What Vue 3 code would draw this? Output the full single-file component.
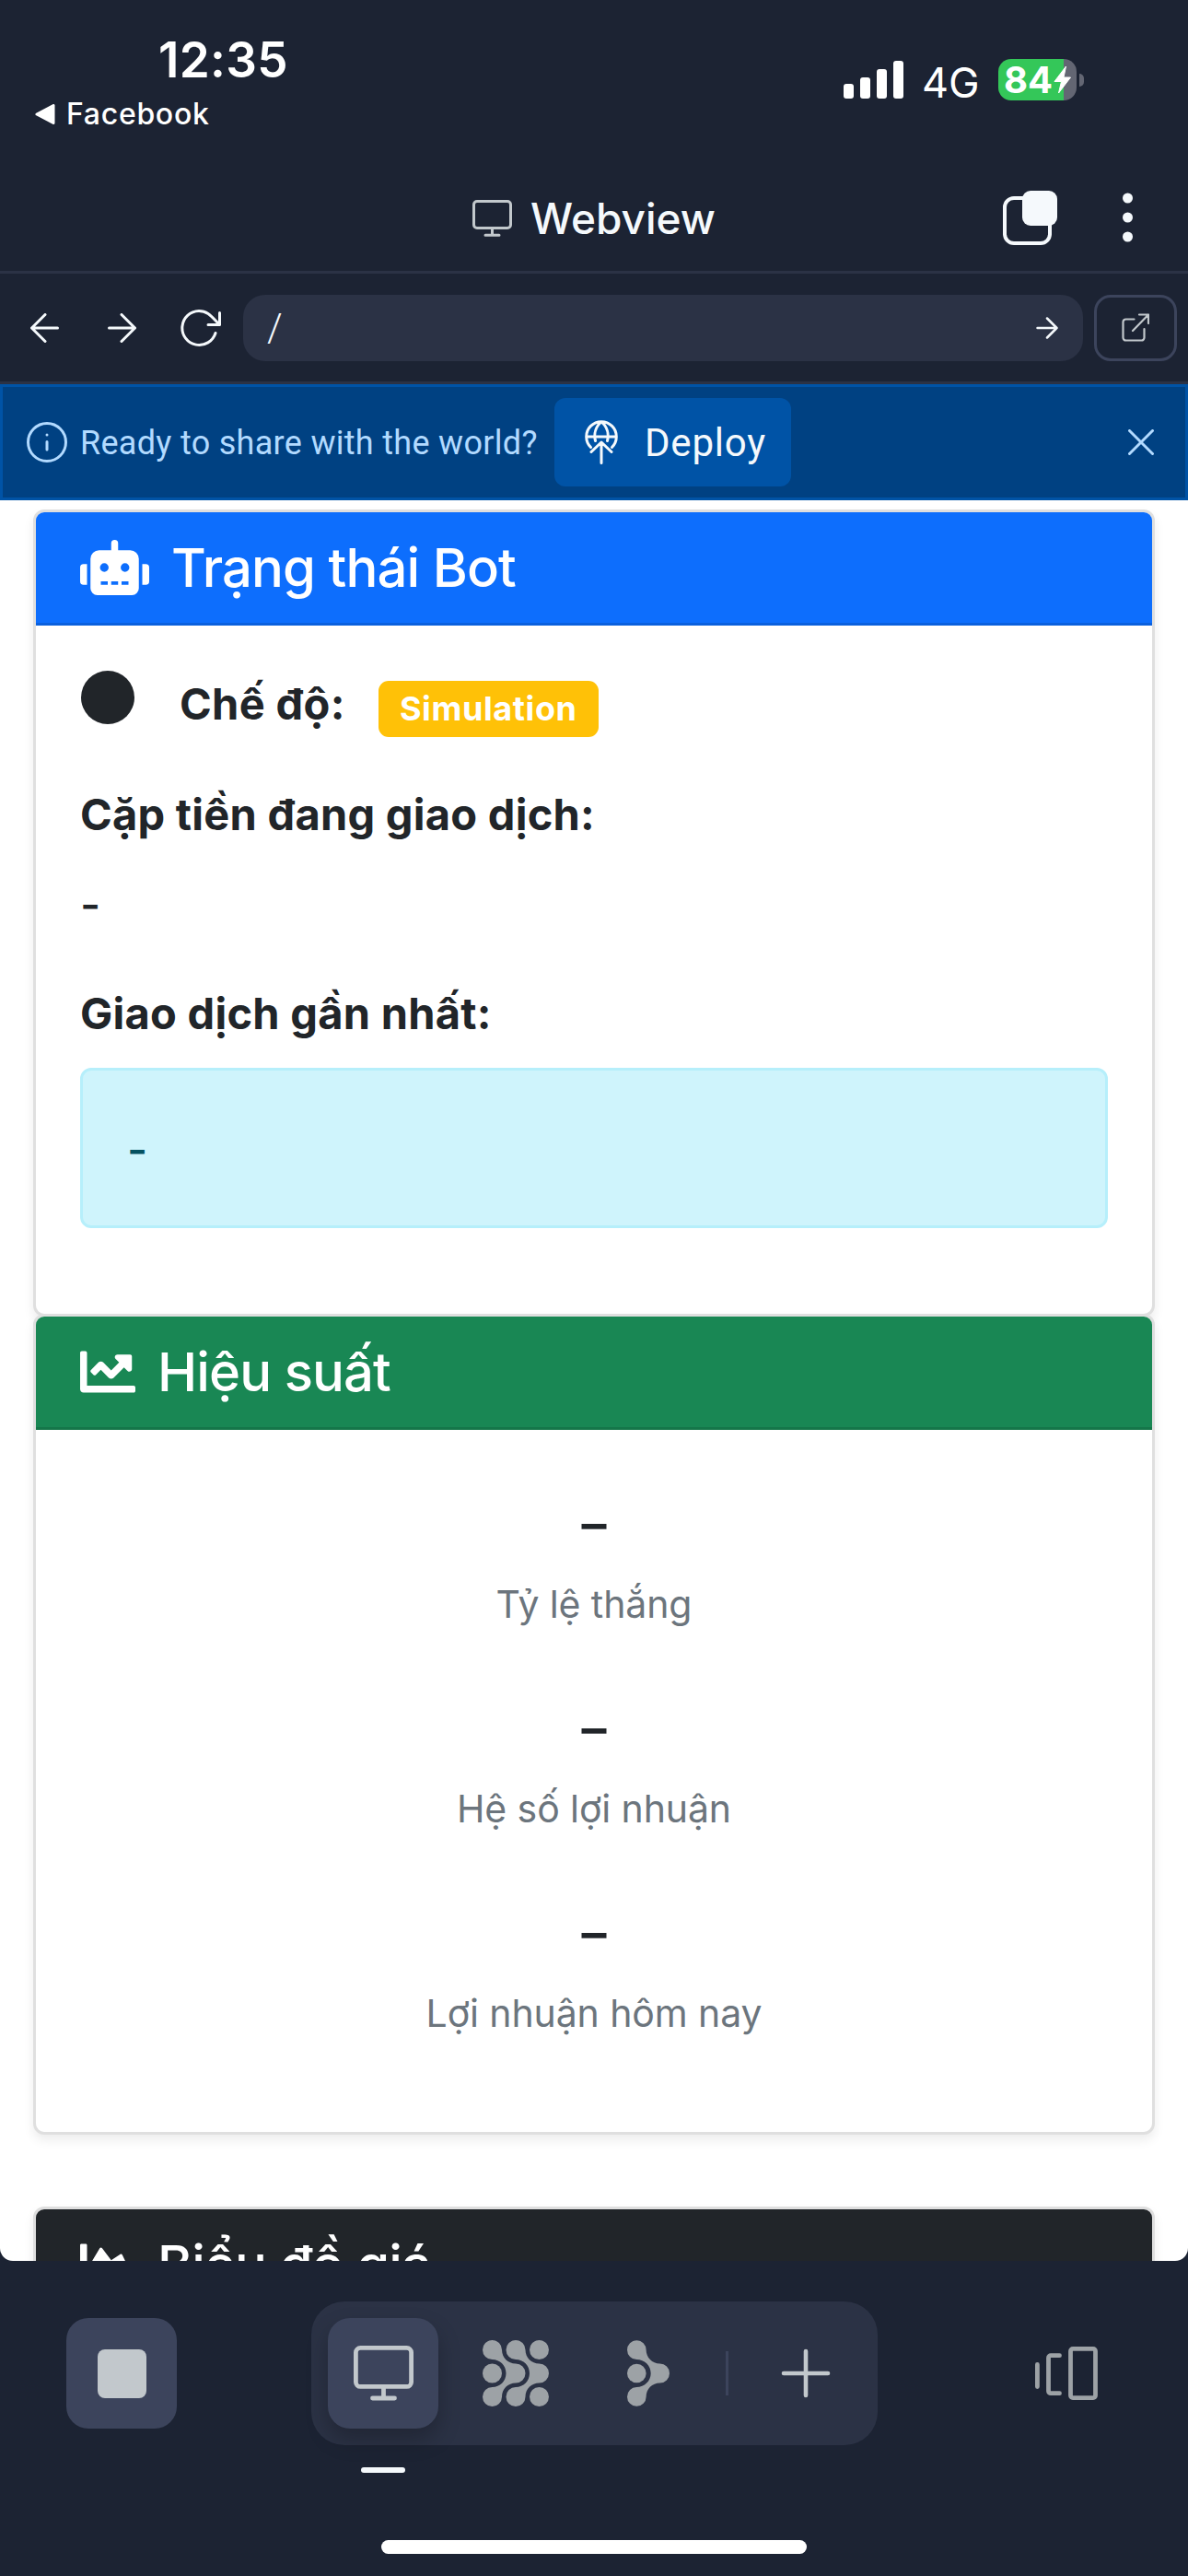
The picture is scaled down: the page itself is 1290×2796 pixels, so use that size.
<script setup>
const bars = [16, 23, 32, 41]
const stats = ['Tỷ lệ thắng', 'Hệ số lợi nhuận', 'Lợi nhuận hôm nay']
</script>

<template>
  <div class="screen">
    <header class="status">
      <div class="status-left">
        <div class="time">12:35</div>
        <div class="back-app">
          <svg width="22" height="22" viewBox="0 0 22 22"><path d="M20 1.500v19L2 11z" fill="#fff" stroke="#fff" stroke-width="3" stroke-linejoin="round" /></svg>
          <span>Facebook</span>
        </div>
      </div>
      <div class="status-right">
        <div class="signal"><i v-for="h in bars" :key="h" :style="{ height: h + 'px' }"></i></div>
        <span class="network">4G</span>
        <div class="battery">
          <span>84</span>
          <svg width="19" height="31" viewBox="0 0 19 31"><path d="M13.500 1 1 17.500h7.500L5.500 30 18.500 13H11z" fill="#fff" stroke="#fff" stroke-linejoin="round" /></svg>
        </div>
        <i class="nub"></i>
      </div>
    </header>

    <div class="titlebar">
      <div class="title">
        <svg width="43" height="40" viewBox="0 0 43 40" fill="none" stroke="#c2c8cc" stroke-width="3" stroke-linecap="round"><rect x="1.500" y="1.500" width="40" height="29" rx="3.500" /><path d="M21.500 31v7M14 38.200h15" /></svg>
        <span>Webview</span>
      </div>
      <div class="title-actions">
        <svg width="59" height="59" viewBox="0 0 59 59"><rect x="2" y="8" width="49" height="49" rx="10" fill="none" stroke="#f5f9fc" stroke-width="4" /><rect x="21" y="0" width="38" height="38" rx="9" fill="#f5f9fc" /></svg>
        <svg width="11" height="54" viewBox="0 0 11 54" fill="#f5f9fc"><circle cx="5.500" cy="6" r="5.500" /><circle cx="5.500" cy="27" r="5.500" /><circle cx="5.500" cy="48" r="5.500" /></svg>
      </div>
    </div>

    <nav class="nav">
      <svg class="back" width="31" height="32" viewBox="0 0 31 32" fill="none" stroke="#f5f9fc" stroke-width="3" stroke-linecap="round" stroke-linejoin="round"><path d="M29.500 16H1.500M16 1.500 1.500 16 16 30.500" /></svg>
      <svg class="forward" width="31" height="32" viewBox="0 0 31 32" fill="none" stroke="#f5f9fc" stroke-width="3" stroke-linecap="round" stroke-linejoin="round"><path d="M1.500 16h28M15 1.500 29.500 16 15 30.500" /></svg>
      <svg class="reload" width="44" height="42" viewBox="0 0 44 42" fill="none" stroke="#f5f9fc" stroke-width="3" stroke-linecap="round" stroke-linejoin="round"><path d="M38 26.500A18.500 18.500 0 1 1 20 2.500C30 2.500 34 9 42.500 17.500M42.500 4.500v13H30" /></svg>
      <div class="address">
        <span>/</span>
        <svg width="24" height="24" viewBox="0 0 24 24" fill="none" stroke="#f5f9fc" stroke-width="2.500" stroke-linecap="round" stroke-linejoin="round"><path d="M1.500 12h21M12 1.500 22.500 12 12 22.500" /></svg>
      </div>
      <div class="external">
        <svg width="30" height="31" viewBox="0 0 30 31" fill="none" stroke="#c2c8cc" stroke-width="2.200" stroke-linecap="round" stroke-linejoin="round"><path d="M13.500 6.500H4.500a3 3 0 0 0-3 3v17a3 3 0 0 0 3 3h17a3 3 0 0 0 3-3v-9.500M19 1.500h10V11M29 1.500 12 19" /></svg>
      </div>
    </nav>

    <div class="banner">
      <svg width="44" height="44" viewBox="0 0 44 44" fill="none" stroke="#b2daff" stroke-width="3" stroke-linecap="round"><circle cx="22" cy="22" r="20.500" /><path d="M22 21.500V30M22 14v.1" /></svg>
      <span class="banner-text">Ready to share with the world?</span>
      <div class="deploy">
        <svg width="36" height="48" viewBox="0 0 36 48" fill="none" stroke="#f5f9fc" stroke-width="3" stroke-linecap="round" stroke-linejoin="round"><path d="M6.500 29.500A16.300 16.300 0 1 1 29.500 29.500M1.700 18h32.600M11.500 22.500C9.500 15 12 7 18 1.700 24 7 26.500 15 24.500 22.500M18 46.500V25M7 34.500 18 24l11 10.500" /></svg>
        <span>Deploy</span>
      </div>
      <svg class="close" width="28" height="28" viewBox="0 0 28 28" fill="none" stroke="#b2daff" stroke-width="3" stroke-linecap="round"><path d="M1.500 1.500l25 25M26.500 1.500l-25 25" /></svg>
    </div>

    <main class="page">
      <section class="card status-card">
        <div class="card-header primary">
          <svg width="75" height="60" viewBox="0 0 640 512" fill="#fff"><path d="M32,224H64V416H32A31.960,31.960,0,0,1,0,384V256A31.960,31.960,0,0,1,32,224Zm512-48V448a64.060,64.060,0,0,1-64,64H160a64.060,64.060,0,0,1-64-64V176a79.970,79.970,0,0,1,80-80H288V32a32,32,0,0,1,64,0V96H464A79.970,79.970,0,0,1,544,176ZM264,256a40,40,0,1,0-40,40A40,40,0,0,0,264,256Zm-8,128H192v32h64Zm96,0H288v32h64ZM456,256a40,40,0,1,0-40,40A40,40,0,0,0,456,256Zm-8,128H384v32h64ZM640,256V384a31.960,31.960,0,0,1-32,32H576V224h32A31.960,31.960,0,0,1,640,256Z" /></svg>
          <span>Trạng thái Bot</span>
        </div>
        <div class="status-body">
          <div class="mode">
            <i class="dot"></i>
            <strong>Chế độ:</strong>
            <span class="badge">Simulation</span>
          </div>
          <div class="label pair-label">Cặp tiền đang giao dịch:</div>
          <div class="value">-</div>
          <div class="label last-label">Giao dịch gần nhất:</div>
          <div class="alert">-</div>
        </div>
      </section>

      <section class="card perf-card">
        <div class="card-header success">
          <svg width="60" height="60" viewBox="0 0 512 512" fill="#fff"><path d="M496 384H64V80c0-8.840-7.160-16-16-16H16C7.160 64 0 71.160 0 80v336c0 17.670 14.330 32 32 32h464c8.840 0 16-7.160 16-16v-32c0-8.840-7.160-16-16-16zM464 96H345.940c-21.380 0-32.090 25.850-16.970 40.970l32.400 32.400L288 242.750l-73.370-73.370c-12.500-12.500-32.760-12.500-45.250 0l-68.690 68.690c-6.250 6.250-6.250 16.380 0 22.630l22.620 22.620c6.250 6.250 16.380 6.250 22.630 0L192 237.250l73.370 73.370c12.500 12.500 32.760 12.500 45.250 0l96-96 32.400 32.400c15.120 15.120 40.970 4.410 40.970-16.970V112c.01-8.840-7.150-16-15.990-16z" /></svg>
          <span>Hiệu suất</span>
        </div>
        <div class="stats">
          <div v-for="s in stats" :key="s" class="stat">
            <div class="stat-value">–</div>
            <div class="stat-label">{{ s }}</div>
          </div>
        </div>
      </section>

      <section class="card chart-card">
        <div class="card-header dark">
          <svg width="60" height="60" viewBox="0 0 512 512" fill="#fff"><path d="M500 384c6.600 0 12 5.400 12 12v40c0 6.600-5.400 12-12 12H12c-6.600 0-12-5.400-12-12V76c0-6.600 5.400-12 12-12h40c6.600 0 12 5.400 12 12v308h436zM372.700 159.500L288 216l-85.300-113.700c-5.100-6.800-15.500-6.300-19.900 1L96 248v104h384l-89.900-187.800c-3.200-6.500-11.400-8.700-17.400-4.700z" /></svg>
          <span>Biểu đồ giá</span>
        </div>
      </section>
    </main>

    <footer class="toolbar">
      <div class="tools">
        <div class="tool stop"><i></i></div>
        <div class="group">
          <div class="tool active">
            <svg width="65" height="60" viewBox="0 0 65 60" fill="none" stroke="#c2c8cc" stroke-width="4.800" stroke-linecap="round"><rect x="2.400" y="2.400" width="60.200" height="42" rx="5" /><path d="M32.500 45v10M20.500 57h24" /></svg>
            <i class="indicator"></i>
          </div>
          <div class="tool">
            <svg width="72" height="72" viewBox="0 0 24 24" fill="#9da2a6"><path d="M7 3.500C7 6.300 9.200 8.500 12 8.500A3.500 3.500 0 0 1 12 15.500C9.200 15.500 7 17.700 7 20.500A3.500 3.500 0 1 1 3.500 17C6.300 17 8.500 14.800 8.500 12C8.500 9.200 6.300 7 3.500 7A3.500 3.500 0 1 1 7 3.500Z" /><path transform="translate(8.500 0)" d="M7 3.500C7 6.300 9.200 8.500 12 8.500A3.500 3.500 0 0 1 12 15.500C9.200 15.500 7 17.700 7 20.500A3.500 3.500 0 1 1 3.500 17C6.300 17 8.500 14.800 8.500 12C8.500 9.200 6.300 7 3.500 7A3.500 3.500 0 1 1 7 3.500Z" /><circle cx="20.500" cy="3.500" r="3.500" /><circle cx="3.500" cy="12" r="3.500" /><circle cx="20.500" cy="20.500" r="3.500" /></svg>
          </div>
          <div class="tool">
            <svg width="46" height="72" viewBox="0 0 15.400 24" fill="#9da2a6"><path d="M6.900 3.500C6.900 6.300 9.100 8.500 11.900 8.500A3.500 3.500 0 0 1 11.900 15.500C9.100 15.500 6.900 17.700 6.900 20.500A3.450 3.500 0 1 1 3.450 17C6.300 17 8.600 14.800 8.600 12C8.600 9.200 6.300 7 3.450 7A3.450 3.500 0 1 1 6.900 3.500Z" /><circle cx="3.450" cy="12" r="3.450" /></svg>
          </div>
          <i class="divider"></i>
          <div class="tool">
            <svg width="54" height="54" viewBox="0 0 54 54" fill="none" stroke="#c2c8cc" stroke-width="4.600" stroke-linecap="round"><path d="M27 3v48M3 27h48" /></svg>
          </div>
        </div>
        <svg class="tabs" width="68" height="58" viewBox="0 0 68 58" fill="none" stroke="#9da2a6" stroke-width="4.800" stroke-linecap="round" stroke-linejoin="round"><path d="M2.400 19.500v24M26.500 9.700H17a2.500 2.500 0 0 0-2.500 2.500v36a2.500 2.500 0 0 0 2.500 2.500h9.500" /><rect x="38.500" y="2.400" width="27" height="53.200" rx="2.500" /></svg>
      </div>
      <i class="home"></i>
    </footer>
  </div>
</template>

<style>
body {
  background: #1c2333;
}
</style>

<style scoped>
.screen {
  width: 1290px;
  height: 2796px;
  overflow: hidden;
  display: flex;
  flex-direction: column;
  background: #1c2333;
  font-family: Inter, "Noto Sans", sans-serif;
}
.screen * {
  box-sizing: border-box;
}
svg,
i {
  display: block;
  flex: none;
}
span,
strong,
.label {
  white-space: nowrap;
}
.status {
  height: 180px;
  flex: none;
  display: flex;
  justify-content: space-between;
  color: #fff;
}
.status-left {
  padding: 35px 0 0 38px;
}
.time {
  margin-left: 134px;
  font-size: 53px;
  font-weight: 600;
  line-height: 60px;
  letter-spacing: 0.3px;
}
.back-app {
  margin-top: 9px;
  display: flex;
  align-items: center;
  gap: 12px;
  font-size: 32px;
  font-weight: 500;
  line-height: 40px;
  letter-spacing: 0.7px;
}
.status-right {
  display: flex;
  align-items: flex-start;
  padding: 64px 113px 0 0;
}
.signal {
  display: flex;
  align-items: flex-end;
  gap: 7px;
  height: 43px;
  margin-right: 20px;
}
.signal i {
  width: 11px;
  border-radius: 3px;
  background: #fff;
}
.network {
  width: 83px;
  margin-top: 3px;
  font-size: 45px;
  line-height: 45px;
}
.battery {
  width: 85px;
  height: 45px;
  border-radius: 14px;
  background: linear-gradient(90deg, #34c759 71px, #636673 71px);
  display: flex;
  align-items: center;
  padding-left: 6px;
  font-size: 40px;
  font-weight: 700;
  line-height: 45px;
}
.battery svg {
  margin-left: 1px;
}
.nub {
  width: 5px;
  height: 14px;
  margin: 16px 0 0 3px;
  border-radius: 0 5px 5px 0;
  background: #636673;
}
.titlebar {
  height: 117px;
  flex: none;
  display: grid;
  grid-template-columns: 1fr auto 1fr;
  align-items: center;
  border-bottom: 3px solid #2b3245;
}
.title {
  grid-column: 2;
  display: flex;
  align-items: center;
  gap: 20px;
  color: #f5f9fc;
  font-size: 46px;
  font-weight: 500;
  line-height: 60px;
}
.title-actions {
  display: flex;
  justify-content: flex-end;
  align-items: center;
  gap: 71px;
  padding: 0 60px 2px 0;
}
.nav {
  height: 120px;
  flex: none;
  display: flex;
  align-items: center;
  padding: 0 12px 0 33px;
  border-bottom: 3px solid #2b3245;
}
.forward {
  margin-left: 53px;
}
.reload {
  margin-left: 48px;
}
.address {
  width: 912px;
  height: 72px;
  margin: 0 12px 0 24px;
  padding: 0 27px 0 26px;
  border-radius: 24px;
  background: #2b3245;
  display: flex;
  align-items: center;
  justify-content: space-between;
  color: #f5f9fc;
  font: 300 42px/72px Roboto, sans-serif;
}
.external {
  width: 90px;
  height: 72px;
  border: 3px solid #3c445c;
  border-radius: 18px;
  display: flex;
  align-items: center;
  justify-content: center;
}
.banner {
  height: 126px;
  flex: none;
  display: flex;
  align-items: center;
  padding: 0 34px 0 26px;
  border: 3px solid #0053a6;
  background: #004182;
  font-family: Roboto, "Open Sans", sans-serif;
}
.banner-text {
  width: 515px;
  padding-left: 14px;
  font-size: 36px;
  line-height: 48px;
  letter-spacing: 0.3px;
  color: #b2daff;
}
.deploy {
  margin-left: 14px;
  width: 257px;
  height: 96px;
  padding-left: 33px;
  border-radius: 12px;
  background: #0053a6;
  display: flex;
  align-items: center;
  gap: 29px;
  color: #f5f9fc;
  font-size: 42px;
  line-height: 60px;
  letter-spacing: 0.8px;
}
.deploy span,
.banner-text {
  padding-top: 1px;
}
.close {
  margin-left: auto;
}
.page {
  height: 1911px;
  flex: none;
  overflow: hidden;
  padding: 10px 36px 0;
  border-radius: 0 0 14px 14px;
  background: #fff;
}
.card {
  border: 3px solid #dfdfdf;
  border-radius: 12px;
  overflow: hidden;
  background: #fff;
  box-shadow: 0 6px 12px rgba(0, 0, 0, 0.075);
}
.card-header {
  height: 123px;
  display: flex;
  align-items: center;
  gap: 24px;
  padding-left: 48px;
  border-bottom: 3px solid rgba(0, 0, 0, 0.125);
  color: #fff;
  font-size: 58px;
  font-weight: 500;
  line-height: 72px;
  letter-spacing: -0.9px;
}
.primary {
  background-color: #0d6efd;
}
.success {
  background-color: #198754;
}
.dark {
  background-color: #212529;
}
.status-card {
  height: 876px;
}
.status-body {
  padding: 49px 48px 0;
  color: #212529;
}
.mode {
  display: flex;
  align-items: flex-start;
  height: 73px;
  font-size: 47px;
}
.dot {
  width: 58px;
  height: 58px;
  margin-left: 1px;
  border-radius: 50%;
  background: #212529;
}
.mode strong {
  margin-left: 49px;
  line-height: 72px;
  letter-spacing: 0.35px;
}
.badge {
  width: 239px;
  height: 61px;
  margin: 11px 0 0 36px;
  border-radius: 11px;
  background: #ffc107;
  color: #fff;
  font-size: 36px;
  font-weight: 700;
  line-height: 61px;
  letter-spacing: 0.6px;
  text-align: center;
}
.label {
  font-size: 47px;
  font-weight: 700;
  line-height: 72px;
  letter-spacing: 0.26px;
}
.pair-label {
  margin-top: 47px;
}
.value {
  margin-top: 26px;
  font-size: 48px;
  font-weight: 500;
  line-height: 72px;
}
.last-label {
  margin-top: 46px;
}
.alert {
  height: 174px;
  margin-top: 23px;
  padding: 50px 48px 0;
  border: 3px solid #b6effb;
  border-radius: 12px;
  background: #cff4fc;
  color: #055160;
  font-size: 48px;
  font-weight: 500;
  line-height: 72px;
}
.perf-card {
  position: relative;
  height: 891px;
  margin-top: -3px;
}
.stats {
  display: flex;
  flex-direction: column;
  gap: 61px;
  padding-top: 59px;
  text-align: center;
}
.stat {
  height: 161px;
}
.stat-value {
  font-size: 54px;
  font-weight: 600;
  line-height: 86px;
  color: #212529;
}
.stat-label {
  margin-top: 13px;
  font-size: 41px;
  line-height: 63px;
  letter-spacing: -0.1px;
  color: #6c757d;
}
.chart-card {
  height: 300px;
  margin-top: 78px;
}
.toolbar {
  height: 342px;
  padding-top: 44px;
}
.tools {
  display: flex;
  align-items: center;
  padding-left: 72px;
}
.tool {
  width: 120px;
  height: 120px;
  flex: none;
  border-radius: 24px;
  display: flex;
  align-items: center;
  justify-content: center;
}
.stop,
.active {
  background: #3c445c;
}
.stop i {
  width: 53px;
  height: 53px;
  border-radius: 8px;
  background: #c2c8cc;
}
.group {
  width: 615px;
  height: 156px;
  margin-left: 146px;
  padding: 0 18px;
  border-radius: 36px;
  background: #2b3245;
  display: flex;
  align-items: center;
  gap: 24px;
}
.active {
  position: relative;
  box-shadow: 0 12px 24px rgba(2, 2, 3, 0.24);
}
.indicator {
  position: absolute;
  left: 36px;
  bottom: -48px;
  width: 48px;
  height: 6px;
  border-radius: 3px;
  background: #f5f9fc;
}
.divider {
  width: 3px;
  height: 48px;
  background: #3c445c;
}
.tabs {
  margin-left: 171px;
}
.home {
  width: 462px;
  height: 15px;
  margin: 103px auto 0;
  border-radius: 8px;
  background: #fff;
}
</style>
